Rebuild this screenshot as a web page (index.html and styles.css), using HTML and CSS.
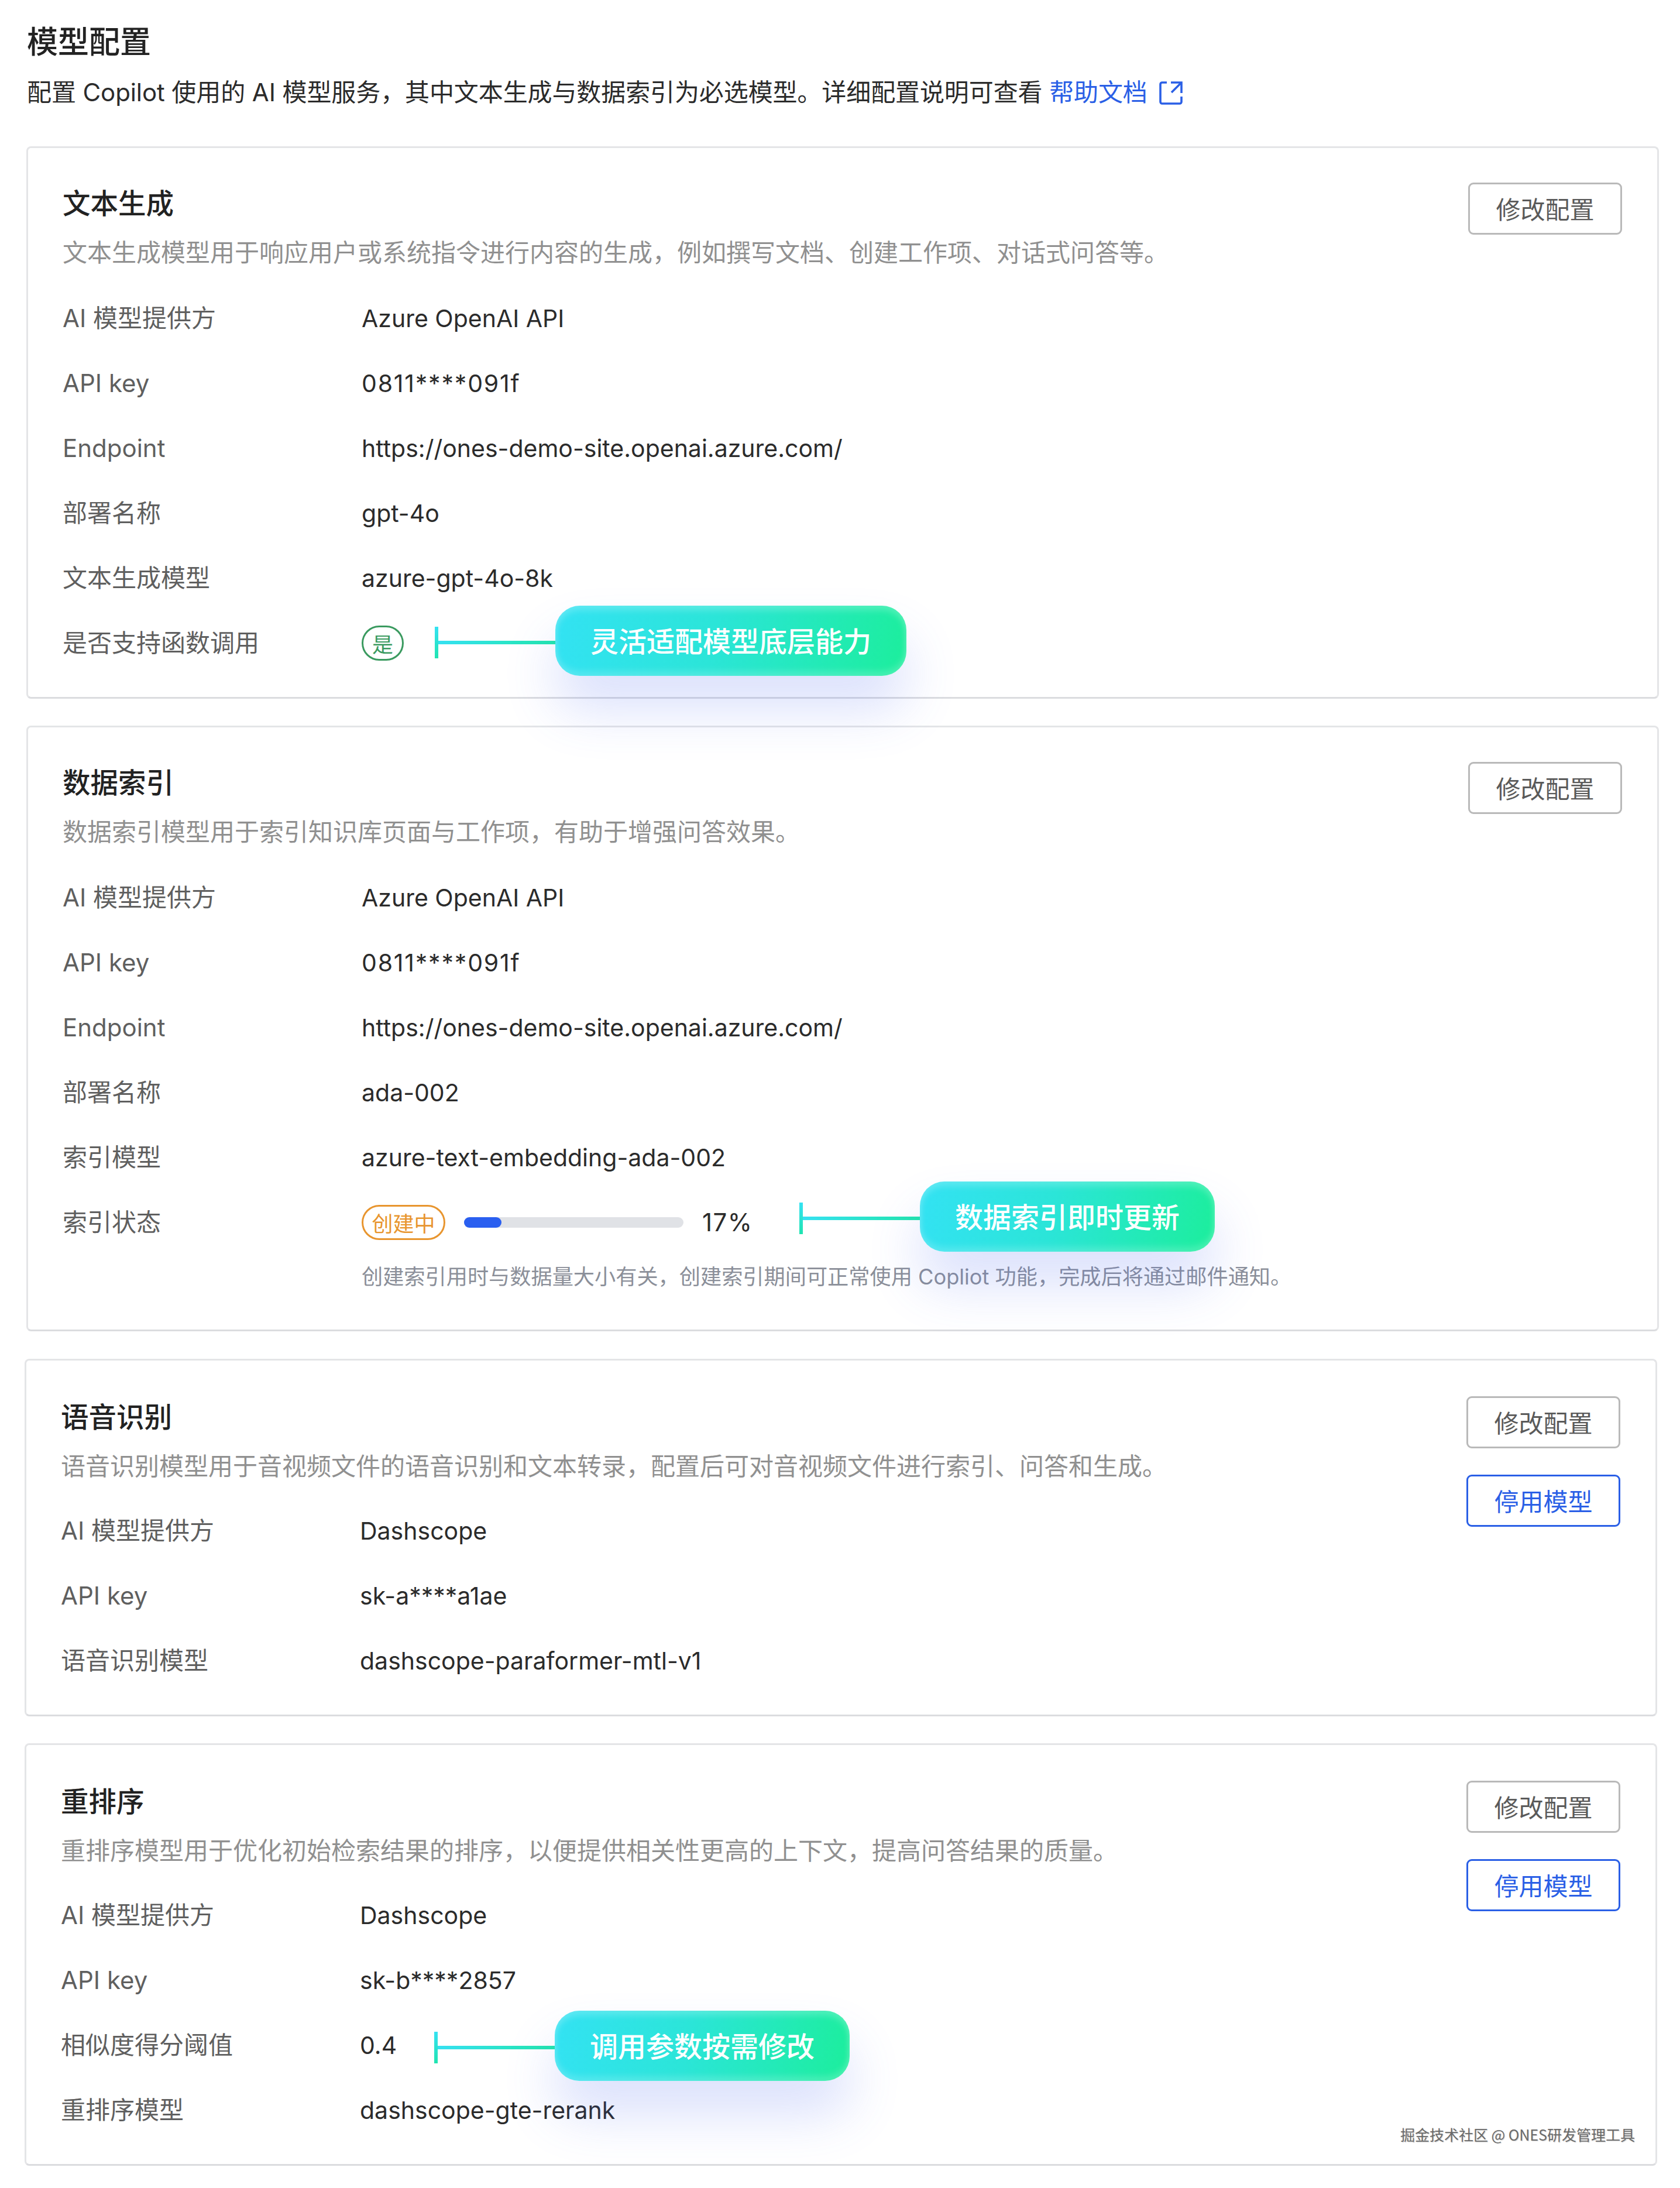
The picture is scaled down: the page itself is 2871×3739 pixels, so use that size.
FILE: index.html
```html
<!DOCTYPE html>
<html lang="zh-CN">
<head>
<meta charset="utf-8">
<title>模型配置</title>
<link rel="stylesheet" href="styles.css">
</head>
<body>
<main class="page">
  <h1 class="page-title">模型配置</h1>
  <p class="page-sub">配置 Copilot 使用的 AI 模型服务，其中文本生成与数据索引为必选模型。详细配置说明可查看 <a class="link">帮助文档<svg class="ext-icon" viewBox="0 0 40 40" fill="none" stroke="currentColor" stroke-width="3.6"><path d="M13 2H5a3 3 0 0 0-3 3v30a3 3 0 0 0 3 3h30a3 3 0 0 0 3-3V26"/><path d="M20 2h18v18"/><path d="M21 19 37 3"/></svg></a></p>

  <section class="card">
    <div class="card-main">
      <h2 class="card-title">文本生成</h2>
      <p class="card-desc">文本生成模型用于响应用户或系统指令进行内容的生成，例如撰写文档、创建工作项、对话式问答等。</p>
      <div class="row"><span class="label">AI 模型提供方</span><span class="value">Azure OpenAI API</span></div>
      <div class="row"><span class="label label-latin">API key</span><span class="value value-key">0811****091f</span></div>
      <div class="row"><span class="label label-latin">Endpoint</span><span class="value">https://ones-demo-site.openai.azure.com/</span></div>
      <div class="row"><span class="label">部署名称</span><span class="value">gpt-4o</span></div>
      <div class="row"><span class="label">文本生成模型</span><span class="value">azure-gpt-4o-8k</span></div>
      <div class="row"><span class="label">是否支持函数调用</span><span class="value"><span class="tag tag-green">是</span></span>
        <div class="callout callout-a"><span class="stem"></span><span class="pill">灵活适配模型底层能力</span></div>
      </div>
    </div>
    <div class="actions"><button class="btn">修改配置</button></div>
  </section>

  <section class="card">
    <div class="card-main">
      <h2 class="card-title">数据索引</h2>
      <p class="card-desc">数据索引模型用于索引知识库页面与工作项，有助于增强问答效果。</p>
      <div class="row"><span class="label">AI 模型提供方</span><span class="value">Azure OpenAI API</span></div>
      <div class="row"><span class="label label-latin">API key</span><span class="value value-key">0811****091f</span></div>
      <div class="row"><span class="label label-latin">Endpoint</span><span class="value">https://ones-demo-site.openai.azure.com/</span></div>
      <div class="row"><span class="label">部署名称</span><span class="value">ada-002</span></div>
      <div class="row"><span class="label">索引模型</span><span class="value">azure-text-embedding-ada-002</span></div>
      <div class="row"><span class="label">索引状态</span><span class="value status"><span class="tag tag-orange">创建中</span><span class="track"><span class="fill" style="width:17%"></span></span><span class="percent">17%</span></span>
        <div class="callout callout-b"><span class="stem"></span><span class="pill">数据索引即时更新</span></div>
      </div>
      <p class="note">创建索引用时与数据量大小有关，创建索引期间可正常使用 Copliot 功能，完成后将通过邮件通知。</p>
    </div>
    <div class="actions"><button class="btn">修改配置</button></div>
  </section>

  <section class="card card-shift">
    <div class="card-main">
      <h2 class="card-title">语音识别</h2>
      <p class="card-desc">语音识别模型用于音视频文件的语音识别和文本转录，配置后可对音视频文件进行索引、问答和生成。</p>
      <div class="row"><span class="label">AI 模型提供方</span><span class="value">Dashscope</span></div>
      <div class="row"><span class="label label-latin">API key</span><span class="value">sk-a****a1ae</span></div>
      <div class="row"><span class="label">语音识别模型</span><span class="value">dashscope-paraformer-mtl-v1</span></div>
    </div>
    <div class="actions"><button class="btn">修改配置</button><button class="btn btn-blue">停用模型</button></div>
  </section>

  <section class="card card-shift">
    <div class="card-main">
      <h2 class="card-title">重排序</h2>
      <p class="card-desc">重排序模型用于优化初始检索结果的排序，以便提供相关性更高的上下文，提高问答结果的质量。</p>
      <div class="row"><span class="label">AI 模型提供方</span><span class="value">Dashscope</span></div>
      <div class="row"><span class="label label-latin">API key</span><span class="value">sk-b****2857</span></div>
      <div class="row"><span class="label">相似度得分阈值</span><span class="value">0.4</span>
        <div class="callout callout-c"><span class="stem"></span><span class="pill">调用参数按需修改</span></div>
      </div>
      <div class="row"><span class="label">重排序模型</span><span class="value">dashscope-gte-rerank</span></div>
    </div>
    <div class="actions"><button class="btn">修改配置</button><button class="btn btn-blue">停用模型</button></div>
    <span class="watermark">掘金技术社区 @ ONES研发管理工具</span>
  </section>
</main>
</body>
</html>
```
FILE: styles.css
```css
* { box-sizing: border-box; }
html, body { margin: 0; background: #fff; }
body {
  font-family: Inter, "Noto Sans CJK SC", sans-serif;
  font-size: 42px;
  color: #2b2b2b;
}
.page { width: 2871px; padding: 42px 36px 38px 45px; }
.page-title {
  margin: 0 0 0 1px;
  font-size: 53px;
  line-height: 60px;
  font-weight: 500;
  color: #222;
}
.page-sub {
  margin: 28px 0 64px 1px;
  line-height: 56px;
  letter-spacing: -0.1px;
  white-space: nowrap;
}
.link { color: #2a5fe6; }
.ext-icon { width: 40px; height: 40px; margin-left: 20px; vertical-align: -6px; }

.card {
  position: relative;
  display: flex;
  margin-top: 46px;
  padding: 59px 60px 37px 59px;
  border: 3px solid #e4e5e7;
  border-bottom-color: #dbdcdf;
  border-radius: 8px;
  background: #fff;
}
.card-shift { margin-top: 47px; margin-left: -3px; margin-right: 3px; }
.card-shift + .card-shift { margin-top: 46px; }
.page-sub + .card { margin-top: 0; }
.card-main { flex: 1; min-width: 0; padding-top: 8px; }
.card-shift .card-main { padding-top: 10px; }
.card-shift .actions { margin-top: 2px; }
.card-title {
  margin: 0;
  font-size: 47.5px;
  line-height: 56px;
  font-weight: 500;
  color: #222;
}
.card-desc {
  margin: 28px 0;
  line-height: 56px;
  color: #909090;
}
.card-shift .card-desc { margin-bottom: 26px; }
.row {
  position: relative;
  display: grid;
  grid-template-columns: 511px 1fr;
  align-items: center;
  height: 111px;
}
.label { padding-bottom: 6px; color: #5f5f5f; }
.label-latin { padding-bottom: 0; }
.value { font-size: 41px; color: #2b2b2b; }
.value-key { letter-spacing: 1.8px; }
.status { display: flex; align-items: center; }
.tag {
  display: inline-flex;
  align-items: center;
  justify-content: center;
  height: 60px;
  border: 3px solid;
  border-radius: 30px;
  font-size: 36px;
}
.tag-green { width: 72px; color: #3a9a5f; vertical-align: middle; }
.tag-orange { width: 143px; color: #e8952e; }
.track {
  width: 375px;
  height: 18px;
  margin-left: 32px;
  border-radius: 9px;
  background: #e0e2e6;
}
.fill { display: block; height: 100%; border-radius: 9px; background: #2a5ff0; }
.percent { margin-left: 32px; font-size: 42px; letter-spacing: 1.5px; }
.note {
  margin: 0 0 28px 511px;
  padding-top: 13px;
  font-size: 36.2px;
  line-height: 50px;
  color: #8b8f99;
  white-space: nowrap;
}

.actions { display: flex; flex-direction: column; gap: 45px; width: 263px; }
.btn {
  height: 89px;
  padding: 0 0 3px;
  border: 3px solid #b9b9b9;
  border-radius: 9px;
  background: #fff;
  font: inherit;
  color: #5a5a5a;
}
.btn-blue { border-color: #2a5fe6; color: #2a5fe6; }

.callout { position: absolute; display: flex; align-items: center; z-index: 1; }
.callout-a { left: 636px; top: -8px; }
.callout-b { left: 1259px; top: -14px; }
.callout-c { left: 638px; top: -3px; }
.stem {
  height: 54px;
  width: 206px;
  margin-top: 6px;
  background:
    linear-gradient(180deg, #35e2f3, #20e4b0) left center / 6px 100% no-repeat,
    linear-gradient(90deg, #36e1f3, #22e6ac) center / 100% 6px no-repeat;
}
.pill {
  display: flex;
  align-items: center;
  height: 120px;
  padding: 0 60px 5px;
  border-radius: 42px;
  background: linear-gradient(100deg, #33e2f3 0%, #2be5d8 45%, #1cee9c 100%);
  box-shadow:
    inset 0 8px 12px rgba(255, 255, 255, .22),
    inset 0 -8px 12px rgba(255, 255, 255, .18),
    0 56px 90px rgba(70, 100, 240, .2);
  color: #fff;
  font-size: 48px;
  font-weight: 500;
  white-space: nowrap;
}
.watermark {
  position: absolute;
  right: 35px;
  bottom: 36px;
  font-family: "Noto Sans CJK SC", sans-serif;
  font-size: 25px;
  line-height: 30px;
  color: #6a6a6a;
  text-shadow: 1px 1px 1px #ccc;
  white-space: nowrap;
}
```
